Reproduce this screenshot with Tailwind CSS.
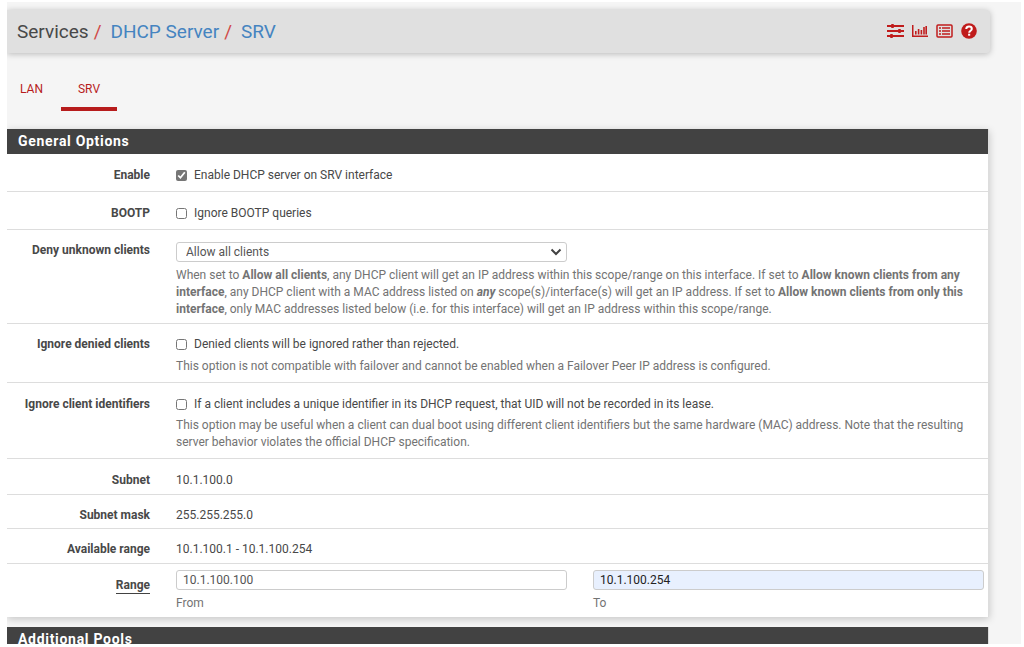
<!DOCTYPE html>
<html lang="en">
<head>
    <meta charset="UTF-8">
    <meta name="viewport" content="width=device-width, initial-scale=1.0">
    <title>Services: DHCP Server: SRV</title>
    <script src="https://cdn.jsdelivr.net/npm/@tailwindcss/browser@4"></script>
</head>
<body class="h-screen overflow-hidden bg-white pl-[7px] pr-[3px] pt-[2px] pb-[3px] font-[Roboto,sans-serif] text-[12px] leading-[17px] text-[#484848]">

    <div class="h-full overflow-hidden bg-[#f5f5f5] pr-[31px] pt-2">

        <header class="flex h-[43px] items-center justify-between rounded-r-[4px] bg-[#e0e0e0] pl-[10px] pr-[13px] shadow-[0_1px_6px_rgba(0,0,0,0.25)]">
            <nav aria-label="Breadcrumb">
                <ol class="flex text-[19px] leading-[24px]">
                    <li>Services<span class="pr-1 pl-[5px] text-[#d04a48]">/</span></li>
                    <li class="pl-[5px]"><a href="#" class="text-[#4584c0]">DHCP Server</a><span class="pr-1 pl-[5px] text-[#d04a48]">/</span></li>
                    <li class="pl-[5px]"><a href="#" class="text-[#4584c0]">SRV</a></li>
                </ol>
            </nav>
            <div class="flex items-center gap-2 pb-[2px] text-[#c01c1c]">
                <a href="#" aria-label="Settings">
                    <svg class="h-4 w-[17px]" viewBox="0 0 17 16" fill="currentColor">
                        <path d="M0 2h17v2H0zM0 7h17v2H0zM0 12h17v2H0z"/>
                        <rect x="4" y="1" width="3" height="4" rx="1"/>
                        <rect x="11" y="6" width="3" height="4" rx="1"/>
                        <rect x="3" y="11" width="3" height="4" rx="1"/>
                    </svg>
                </a>
                <a href="#" aria-label="Status graph">
                    <svg class="h-4 w-[16px]" viewBox="0 0 16 16" fill="currentColor">
                        <path d="M0 2h1.500v10.500H16V14H0zM3 8h1.600v3.500H3zM5.800 6h1.600v5.500H5.800zM8.600 7h1.600v4.500H8.600zM11.200 4h1.600v7.500h-1.600zM13.400 3H15v8.500h-1.600z"/>
                    </svg>
                </a>
                <a href="#" aria-label="Logs">
                    <svg class="h-4 w-[17px]" viewBox="0 0 17 16" fill="none" stroke="currentColor">
                        <rect x="1" y="2" width="15" height="12" rx="1" stroke-width="1.5"/>
                        <path d="M3 5h2M6 5h8M3 8h2M6 8h8M3 11h2M6 11h8" stroke-width="1.4"/>
                    </svg>
                </a>
                <a href="#" aria-label="Help">
                    <svg class="size-4" viewBox="0 0 16 16">
                        <circle cx="8" cy="8" r="7.8" fill="currentColor"/>
                        <path d="M5.2 6C5.4 4.400 6.500 3.600 8 3.600c1.700 0 2.800 1 2.800 2.300C10.800 7.700 8.200 7.700 8.200 9.700" fill="none" stroke="#fff" stroke-width="2"/>
                        <path d="M7.100 10.700h2.100v2H7.100z" fill="#fff"/>
                    </svg>
                </a>
            </div>
        </header>

        <nav class="mt-[17px] flex leading-[20px] text-[#b71c1c]" aria-label="Interfaces">
            <a href="#" class="border-b-4 border-transparent px-[13px] pt-[9px] pb-[8px]">LAN</a>
            <a href="#" class="ml-[5px] border-b-4 border-[#b71c1c] px-[17px] pt-[9px] pb-[8px]" aria-current="page">SRV</a>
        </nav>

        <form>
            <section class="mt-[18px] mr-px border-r border-[#dddddd] bg-white shadow-[0_2px_8px_rgba(0,0,0,0.2)]">
                <h2 class="h-[25px] bg-[#424242] pl-[11px] text-[14px] leading-[24px] font-bold tracking-wider text-white">General Options</h2>

                <div class="grid grid-cols-[143px_1fr] gap-[26px] border-b border-[#dddddd] pt-[13px] pr-1 pb-[7px]">
                    <label for="enable" class="text-right font-bold">Enable</label>
                    <div class="flex items-center gap-[7px]">
                        <input type="checkbox" id="enable" class="size-[11px] accent-[#767676]" checked>
                        <label for="enable">Enable DHCP server on SRV interface</label>
                    </div>
                </div>

                <div class="grid grid-cols-[143px_1fr] gap-[26px] border-b border-[#dddddd] pt-[13px] pr-1 pb-[7px]">
                    <label for="bootp" class="text-right font-bold">BOOTP</label>
                    <div class="flex items-center gap-[7px]">
                        <input type="checkbox" id="bootp" class="size-[11px]">
                        <label for="bootp">Ignore BOOTP queries</label>
                    </div>
                </div>

                <div class="grid grid-cols-[143px_1fr] gap-[26px] border-b border-[#dddddd] pt-3 pr-1 pb-[5px]">
                    <label for="denyunknown" class="text-right font-bold">Deny unknown clients</label>
                    <div>
                        <div class="grid grid-cols-2 gap-[26px]">
                            <div class="relative">
                                <select id="denyunknown" class="block h-[20px] w-full appearance-none rounded-[3px] border border-[#cccccc] bg-white pl-[9px] leading-[18px] text-[#555555]">
                                    <option>Allow all clients</option>
                                    <option>Allow known clients from any interface</option>
                                    <option>Allow known clients from only this interface</option>
                                </select>
                                <svg class="pointer-events-none absolute top-[6px] right-[5px] h-2 w-3" viewBox="0 0 12 8" fill="none" stroke="#424242" stroke-width="2">
                                    <path d="M1.500 1.500L6 6l4.500-4.500"/>
                                </svg>
                            </div>
                        </div>
                        <p class="mt-[5px] text-[#737373]">When set to <b>Allow all clients</b>, any DHCP client will get an IP address within this scope/range on this interface. If set to <b>Allow known clients from any interface</b>, any DHCP client with a MAC address listed on <b><i>any</i></b> scope(s)/interface(s) will get an IP address. If set to <b>Allow known clients from only this interface</b>, only MAC addresses listed below (i.e. for this interface) will get an IP address within this scope/range.</p>
                    </div>
                </div>

                <div class="grid grid-cols-[143px_1fr] gap-[26px] border-b border-[#dddddd] pt-3 pr-1 pb-[7px]">
                    <label for="ignoredenied" class="text-right font-bold">Ignore denied clients</label>
                    <div>
                        <div class="flex items-center gap-[7px]">
                            <input type="checkbox" id="ignoredenied" class="size-[11px]">
                            <label for="ignoredenied">Denied clients will be ignored rather than rejected.</label>
                        </div>
                        <p class="mt-[5px] text-[#737373]">This option is not compatible with failover and cannot be enabled when a Failover Peer IP address is configured.</p>
                    </div>
                </div>

                <div class="grid grid-cols-[143px_1fr] gap-[26px] border-b border-[#dddddd] pt-[13px] pr-1 pb-[7px]">
                    <label for="ignoreuids" class="text-right font-bold">Ignore client identifiers</label>
                    <div>
                        <div class="flex items-center gap-[7px]">
                            <input type="checkbox" id="ignoreuids" class="size-[11px]">
                            <label for="ignoreuids">If a client includes a unique identifier in its DHCP request, that UID will not be recorded in its lease.</label>
                        </div>
                        <p class="mt-[4px] text-[#737373]">This option may be useful when a client can dual boot using different client identifiers but the same hardware (MAC) address. Note that the resulting server behavior violates the official DHCP specification.</p>
                    </div>
                </div>

                <dl>
                    <div class="grid grid-cols-[143px_1fr] gap-[26px] border-b border-[#dddddd] pt-[13px] pr-1 pb-[5px]">
                        <dt class="text-right font-bold">Subnet</dt>
                        <dd>10.1.100.0</dd>
                    </div>
                    <div class="grid grid-cols-[143px_1fr] gap-[26px] border-b border-[#dddddd] pt-3 pr-1 pb-1">
                        <dt class="text-right font-bold">Subnet mask</dt>
                        <dd>255.255.255.0</dd>
                    </div>
                    <div class="grid grid-cols-[143px_1fr] gap-[26px] border-b border-[#dddddd] pt-3 pr-1 pb-[5px]">
                        <dt class="text-right font-bold">Available range</dt>
                        <dd>10.1.100.1 - 10.1.100.254</dd>
                    </div>
                </dl>

                <div class="grid grid-cols-[143px_1fr] gap-[26px] pt-[6px] pr-1 pb-[5px]">
                    <div class="pt-[7px] text-right font-bold"><span id="range" class="inline-block border-b border-[#424242] leading-[15px]">Range</span></div>
                    <div class="grid grid-cols-2 gap-[26px]" role="group" aria-labelledby="range">
                        <div>
                            <input type="text" id="rangefrom" value="10.1.100.100" class="block h-[20px] w-full rounded-[3px] border border-[#cccccc] bg-white px-[6px] text-[#555555]">
                            <label for="rangefrom" class="mt-[5px] block text-[#737373]">From</label>
                        </div>
                        <div>
                            <input type="text" id="rangeto" value="10.1.100.254" class="block h-[20px] w-full rounded-[3px] border border-[#cccccc] bg-[#e8f0fe] px-[6px] text-[#222222]">
                            <label for="rangeto" class="mt-[5px] block text-[#737373]">To</label>
                        </div>
                    </div>
                </div>
            </section>

            <section class="mt-[10px] mr-px border-r border-[#dddddd] bg-white">
                <h2 class="h-[25px] bg-[#424242] pl-[11px] text-[14px] leading-[24px] font-bold tracking-wider text-white">Additional Pools</h2>
            </section>
        </form>
    </div>
</body>
</html>
